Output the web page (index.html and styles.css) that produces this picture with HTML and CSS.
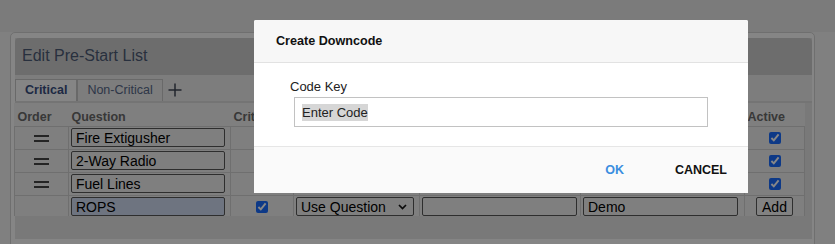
FILE: index.html
```html
<!DOCTYPE html>
<html lang="en">

<head>
  <meta charset="UTF-8">
  <title>Edit Pre-Start List</title>
  <link rel="stylesheet" href="styles.css">
</head>

<body>
  <div class="topbar"></div>
  <div class="page">
    <div class="panel">
      <div class="panel-inner">
        <div class="panel-title">Edit Pre-Start List</div>
        <div class="tabs">
          <div class="tab active">Critical</div>
          <div class="tab">Non-Critical</div>
          <div class="tab-add">
            <svg width="14" height="14" viewBox="0 0 14 14"><path d="M7 0.5v13M0.5 7h13" stroke="#3f4757" stroke-width="1.5" fill="none"/></svg>
          </div>
        </div>
        <table class="list">
          <colgroup>
            <col style="width:54px">
            <col style="width:162px">
            <col style="width:63px">
            <col style="width:126px">
            <col style="width:161px">
            <col style="width:164px">
            <col style="width:60px">
          </colgroup>
          <thead>
            <tr>
              <th>Order</th>
              <th>Question</th>
              <th>Critical</th>
              <th></th>
              <th></th>
              <th></th>
              <th>Active</th>
            </tr>
          </thead>
          <tbody>
            <tr>
              <td class="order"><span class="handle"></span></td>
              <td><input class="field q" type="text" value="Fire Extigusher"></td>
              <td class="center"><input type="checkbox" checked></td>
              <td></td>
              <td></td>
              <td></td>
              <td class="center"><input type="checkbox" checked></td>
            </tr>
            <tr>
              <td class="order"><span class="handle"></span></td>
              <td><input class="field q" type="text" value="2-Way Radio"></td>
              <td class="center"><input type="checkbox" checked></td>
              <td></td>
              <td></td>
              <td></td>
              <td class="center"><input type="checkbox" checked></td>
            </tr>
            <tr>
              <td class="order"><span class="handle"></span></td>
              <td><input class="field q" type="text" value="Fuel Lines"></td>
              <td class="center"><input type="checkbox" checked></td>
              <td></td>
              <td></td>
              <td></td>
              <td class="center"><input type="checkbox" checked></td>
            </tr>
            <tr class="new-row">
              <td class="order"></td>
              <td><input class="field q filled" type="text" value="ROPS"></td>
              <td class="center"><input type="checkbox" checked></td>
              <td>
                <div class="select-wrap">
                  <select class="field sel">
                    <option>Use Question</option>
                  </select>
                  <svg class="chev" width="9" height="6" viewBox="0 0 9 6"><path d="M1 1l3.5 3.5L8 1" stroke="#111" stroke-width="1.7" fill="none"/></svg>
                </div>
              </td>
              <td><input class="field wide" type="text" value=""></td>
              <td><input class="field wide" type="text" value="Demo"></td>
              <td class="center"><button class="add-btn">Add</button></td>
            </tr>
          </tbody>
        </table>
        <div class="panel-foot"></div>
      </div>
    </div>
  </div>

  <div class="backdrop"></div>

  <div class="modal">
    <div class="modal-head">Create Downcode</div>
    <div class="modal-body">
      <div class="label">Code Key</div>
      <div class="code-input"><span class="picked">Enter Code</span></div>
    </div>
    <div class="modal-foot">
      <button class="btn ok">OK</button>
      <button class="btn cancel">CANCEL</button>
    </div>
  </div>
</body>

</html>
```

FILE: styles.css
```css
body {
  margin: 0;
  overflow: hidden;
  font-family: "Liberation Sans", Arial, sans-serif;
  background-color: #f2f2f2;
}

.topbar {
  height: 32px;
  background-color: #e8e8e8;
}

.page {
  padding: 0 20px 0 10px;
}

.panel {
  height: 260px;
  border: 1px solid #d2d2d2;
  border-radius: 5px;
  background-color: #fcfcfc;
  padding: 5px 2px 0 4px;
}

.panel-inner {
  background-color: #e4e4e4;
}

.panel-title {
  height: 37px;
  display: flex;
  align-items: center;
  padding: 0 7px 2px;
  box-sizing: border-box;
  background-color: #cfcfcf;
  border-radius: 4px 4px 0 0;
  font-size: 16px;
  color: #4d5b75;
}

.tabs {
  height: 28px;
  box-sizing: border-box;
  padding-top: 4px;
  display: flex;
  align-items: flex-start;
  background-color: #ececec;
  border-bottom: 2px solid #dcdcdc;
}

.tab {
  height: 22px;
  box-sizing: border-box;
  line-height: 20px;
  padding: 0 9px;
  border: 1px solid #c6c6c6;
  border-bottom: none;
  font-size: 12.5px;
  color: #576888;
  background-color: #ececec;
}

.tab.active {
  font-weight: bold;
  color: #394f80;
  background-color: #fbfbfb;
}

.tab-add {
  margin: 4px 0 0 5px;
  display: flex;
}

.list {
  border-collapse: collapse;
  table-layout: fixed;
  width: 790px;
  margin-left: -1px;
  background-color: #f0f0f0;
}

.list th {
  height: 22px;
  padding: 0 0 1px 3px;
  vertical-align: bottom;
  text-align: left;
  font-size: 12.5px;
  line-height: 15px;
  color: #6a6a6a;
  white-space: nowrap;
  overflow: hidden;
}

.list td {
  border: 1px solid #d2d2d2;
  padding: 1px 2px 2px;
  height: 19px;
}

.list .new-row td {
  padding-bottom: 0;
  border-bottom: none;
}

.list .center {
  text-align: center;
}

.order {
  text-align: center;
}

.handle {
  display: inline-block;
  width: 15px;
  height: 3px;
  border-top: 2px solid #444;
  border-bottom: 2px solid #444;
  vertical-align: middle;
}

.field {
  height: 19px;
  box-sizing: border-box;
  border: 1px solid #585858;
  border-radius: 2px;
  background: transparent;
  padding: 0 4px;
  font-family: "Liberation Sans", Arial, sans-serif;
  font-size: 14px;
  color: #000;
  display: block;
}

.field.q {
  width: 154px;
}

.field.filled {
  background-color: #d0dbf1;
}

.field.wide {
  width: 155px;
}

.select-wrap {
  position: relative;
  width: 118px;
}

.field.sel {
  width: 118px;
  appearance: none;
  padding: 0 0 0 4px;
}

.chev {
  position: absolute;
  right: 7px;
  top: 7px;
}

input[type="checkbox"] {
  width: 12px;
  height: 12px;
  margin: 0;
  vertical-align: middle;
  accent-color: #1a6cff;
}

.add-btn {
  width: 37px;
  height: 19px;
  padding: 0;
  border: 1px solid #5a5a5a;
  border-radius: 2px;
  background-color: #f6f6f6;
  font-family: "Liberation Sans", Arial, sans-serif;
  font-size: 14px;
  color: #000;
}

.panel-foot {
  height: 23px;
}

.backdrop {
  position: fixed;
  inset: 0;
  background-color: rgba(0, 0, 0, 0.47);
}

.modal {
  position: absolute;
  left: 254px;
  top: 20px;
  width: 494px;
  background-color: #fff;
  border-radius: 2px;
}

.modal-head {
  height: 43px;
  box-sizing: border-box;
  padding: 0 22px;
  display: flex;
  align-items: center;
  background-color: #f7f7f7;
  border-bottom: 1px solid #e2e2e2;
  border-radius: 2px 2px 0 0;
  font-size: 12.6px;
  font-weight: bold;
  color: #111;
}

.modal-body {
  padding: 16px 40px 19px;
}

.label {
  margin-left: -4px;
  font-size: 13px;
  line-height: 15px;
  color: #222;
}

.code-input {
  margin-top: 3px;
  width: 414px;
  height: 30px;
  box-sizing: border-box;
  border: 1px solid #c2c2c2;
  padding: 0 7px;
  display: flex;
  align-items: center;
  font-size: 13px;
  color: #222;
}

.picked {
  background-color: #d6d6d6;
  line-height: 17px;
}

.modal-foot {
  height: 47px;
  box-sizing: border-box;
  border-top: 1px solid #e6e6e6;
  background-color: #fafafa;
  display: flex;
  align-items: center;
  justify-content: flex-end;
  padding: 0 9px 0 0;
  gap: 27px;
}

.btn {
  border: none;
  background: none;
  padding: 6px 12px;
  font-family: "Liberation Sans", Arial, sans-serif;
  font-size: 12.5px;
  font-weight: bold;
  cursor: pointer;
}

.btn.ok {
  color: #3a8ee0;
}

.btn.cancel {
  color: #111;
}
```
